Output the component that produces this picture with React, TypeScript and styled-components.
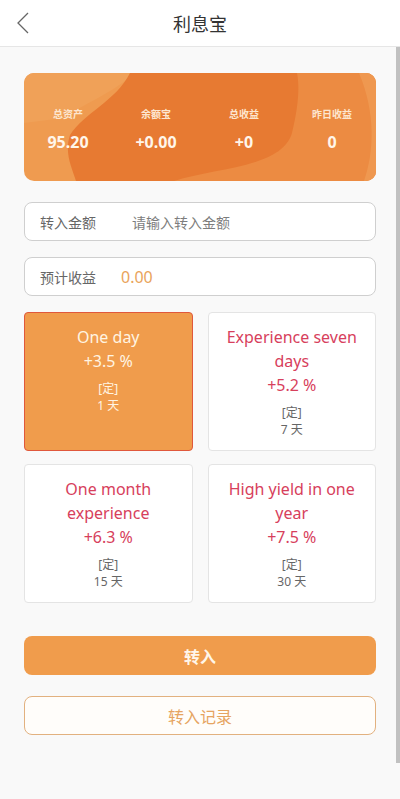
import styled, { createGlobalStyle } from "styled-components";

const GlobalStyle = createGlobalStyle`
  html, body {
    margin: 0;
    padding: 0;
    background: #f9f9f9;
  }
  body {
    font-family: "Noto Sans", "Noto Sans CJK SC", sans-serif;
  }
  * {
    box-sizing: border-box;
  }
`;

const Page = styled.div`
  width: 400px;
  height: 799px;
  display: flex;
  flex-direction: column;
  background: #f9f9f9;
  overflow: hidden;
`;

const Header = styled.div`
  height: 47px;
  flex-shrink: 0;
  background: #fff;
  border-bottom: 1px solid #e6e6e6;
  display: grid;
  grid-template-columns: 60px 1fr 60px;
  align-items: center;
`;

const BackButton = styled.div`
  display: flex;
  align-items: center;
  padding-left: 16px;
  height: 100%;
`;

const Title = styled.h1`
  margin: 0;
  text-align: center;
  font-family: "Noto Sans CJK SC", sans-serif;
  font-size: 18px;
  font-weight: 400;
  color: #333;
`;

const Body = styled.div`
  flex: 1;
  display: flex;
  min-height: 0;
`;

const Main = styled.div`
  flex: 1;
  padding: 26px 20px 0 24px;
  display: flex;
  flex-direction: column;
`;

const Rail = styled.div`
  width: 4px;
  display: flex;
  flex-direction: column;
`;

const Thumb = styled.div`
  height: 716px;
  background: #c1c1c1;
`;

const Banner = styled.div`
  position: relative;
  height: 108px;
  border-radius: 10px;
  overflow: hidden;
  background: #ef9b50;
  display: grid;
  grid-template-columns: repeat(4, 1fr);
  align-content: center;
`;

const BannerArt = styled.svg`
  position: absolute;
  inset: 0;
  width: 100%;
  height: 100%;
`;

const Stat = styled.div`
  position: relative;
  display: flex;
  flex-direction: column;
  align-items: center;
  gap: 11px;
  padding-top: 4px;
`;

const StatLabel = styled.div`
  font-family: "Noto Sans CJK SC", sans-serif;
  font-size: 10px;
  font-weight: 700;
  color: #fde6cf;
  line-height: 14px;
`;

const StatValue = styled.div`
  font-family: "Noto Sans", sans-serif;
  font-size: 16px;
  font-weight: 700;
  color: #fff6ea;
  line-height: 20px;
`;

const Field = styled.div<{ $top: number }>`
  margin-top: ${(p) => p.$top}px;
  height: 39px;
  border: 1px solid #cfcfcf;
  border-radius: 8px;
  background: #fff;
  display: flex;
  align-items: center;
  padding-left: 15px;
`;

const FieldLabel = styled.span<{ $width: number }>`
  width: ${(p) => p.$width}px;
  font-family: "Noto Sans CJK SC", sans-serif;
  font-size: 14px;
  color: #666;
`;

const Placeholder = styled.span`
  font-family: "Noto Sans CJK SC", sans-serif;
  font-size: 14px;
  color: #7d7d7d;
`;

const Estimate = styled.span`
  font-size: 16px;
  color: #e9a35b;
`;

const Grid = styled.div`
  margin-top: 16px;
  display: grid;
  grid-template-columns: repeat(2, 1fr);
  column-gap: 15px;
  row-gap: 13px;
`;

const Card = styled.div<{ $active?: boolean }>`
  height: 139px;
  border-radius: 4px;
  border: 1px solid ${(p) => (p.$active ? "#e0583c" : "#e4e4e4")};
  background: ${(p) => (p.$active ? "#f09c4c" : "#fff")};
  padding: 12px 8px 0;
  display: flex;
  flex-direction: column;
  align-items: center;
  text-align: center;
`;

const CardTitle = styled.div<{ $active?: boolean }>`
  font-size: 16px;
  line-height: 24px;
  color: ${(p) => (p.$active ? "#fff4e2" : "#d7405c")};
`;

const Small = styled.div<{ $active?: boolean }>`
  font-family: "Noto Sans", "Noto Sans CJK SC", sans-serif;
  font-size: 12px;
  line-height: 17px;
  color: ${(p) => (p.$active ? "#fff4e2" : "#666")};
`;

const Term = styled.div`
  margin-top: 7px;
`;

const PrimaryButton = styled.button`
  margin-top: 33px;
  height: 39px;
  border: none;
  border-radius: 8px;
  background: #f09c4c;
  color: #fff6ea;
  font-family: "Noto Sans CJK SC", sans-serif;
  font-size: 16px;
  font-weight: 700;
`;

const OutlineButton = styled.button`
  margin-top: 21px;
  height: 39px;
  border: 1px solid #e2b17f;
  border-radius: 8px;
  background: #fffdfa;
  color: #e6a461;
  font-family: "Noto Sans CJK SC", sans-serif;
  font-size: 16px;
`;

const stats = [
  { label: "总资产", value: "95.20" },
  { label: "余额宝", value: "+0.00" },
  { label: "总收益", value: "+0" },
  { label: "昨日收益", value: "0" },
];

const plans = [
  { name: "One day", rate: "+3.5 %", days: "1 天", active: true },
  { name: "Experience seven days", rate: "+5.2 %", days: "7 天" },
  { name: "One month experience", rate: "+6.3 %", days: "15 天" },
  { name: "High yield in one year", rate: "+7.5 %", days: "30 天" },
];

export default function App() {
  return (
    <Page>
      <GlobalStyle />
      <Header>
        <BackButton>
          <svg width="14" height="22" viewBox="0 0 14 22">
            <path d="M12 1 L2 11 L12 21" fill="none" stroke="#666" strokeWidth="1.3" />
          </svg>
        </BackButton>
        <Title>利息宝</Title>
        <div />
      </Header>
      <Body>
        <Main>
          <Banner>
            <BannerArt viewBox="0 0 352 108" preserveAspectRatio="none">
              <path d="M0 0 H110 C90 20 60 30 40 45 L0 50 Z" fill="#f0a158" />
              <path d="M250 0 H352 V108 H120 C200 95 260 80 268 40 C270 20 262 8 250 0 Z" fill="#ec8b42" />
              <path d="M335 0 H352 V108 H340 C350 80 352 40 335 0 Z" fill="#ef9850" />
              <path
                d="M106 0 C92 28 60 40 46 62 C40 80 48 95 52 108 L150 108 C190 95 258 95 268 60 C274 35 276 15 273 0 Z"
                fill="#e77a32"
              />
            </BannerArt>
            {stats.map((s) => (
              <Stat key={s.label}>
                <StatLabel>{s.label}</StatLabel>
                <StatValue>{s.value}</StatValue>
              </Stat>
            ))}
          </Banner>
          <Field $top={21}>
            <FieldLabel $width={92}>转入金额</FieldLabel>
            <Placeholder>请输入转入金额</Placeholder>
          </Field>
          <Field $top={16}>
            <FieldLabel $width={81}>预计收益</FieldLabel>
            <Estimate>0.00</Estimate>
          </Field>
          <Grid>
            {plans.map((p) => (
              <Card key={p.name} $active={p.active}>
                <CardTitle $active={p.active}>{p.name}</CardTitle>
                <CardTitle $active={p.active}>{p.rate}</CardTitle>
                <Term>
                  <Small $active={p.active}>[定]</Small>
                  <Small $active={p.active}>{p.days}</Small>
                </Term>
              </Card>
            ))}
          </Grid>
          <PrimaryButton>转入</PrimaryButton>
          <OutlineButton>转入记录</OutlineButton>
        </Main>
        <Rail>
          <Thumb />
        </Rail>
      </Body>
    </Page>
  );
}
